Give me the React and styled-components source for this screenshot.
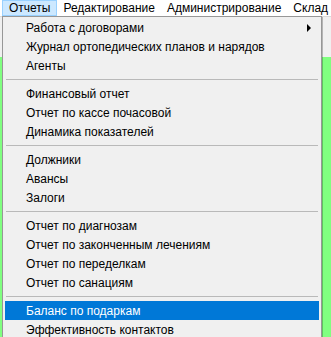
import React from "react";
import styled, { createGlobalStyle } from "styled-components";

const Global = createGlobalStyle`
  html, body { margin: 0; padding: 0; }
  body {
    width: 331px;
    height: 337px;
    overflow: hidden;
    font-family: "Liberation Sans", Arial, sans-serif;
    font-size: 12px;
    color: #000;
  }
`;

const Page = styled.div`
  position: relative;
  width: 331px;
  height: 337px;
  display: flex;
  flex-direction: column;
  background: #80ff80;
`;

const MenuBar = styled.div`
  height: 16px;
  display: flex;
  align-items: stretch;
  padding-left: 2px;
  background: #ffffff;
  white-space: nowrap;
  overflow: hidden;
`;

const BarItem = styled.div`
  display: flex;
  align-items: center;
  padding: 0 6px;
  border: 1px solid ${(p) => (p.$active ? "#99d1ff" : "transparent")};
  border-left-width: ${(p) => (p.$active ? 1 : 0)}px;
  border-right-width: ${(p) => (p.$active ? 1 : 0)}px;
  background: ${(p) => (p.$active ? "#cce8ff" : "transparent")};
  line-height: 14px;
`;

const Toolbar = styled.div`
  height: 41px;
  background: #f0f0f0;
  border-top: 1px solid #dadada;
  box-sizing: border-box;
`;

const Dropdown = styled.div`
  position: absolute;
  top: 16px;
  left: 2px;
  width: 320px;
  box-sizing: border-box;
  background: #f0f0f0;
  border: 1px solid #979797;
  box-shadow: 1px 1px 0 rgba(0, 0, 0, 0.25);
  padding: 1px 0;
  display: flex;
  flex-direction: column;
`;

const Item = styled.div`
  position: relative;
  height: 19px;
  margin: 0 2px;
  padding-left: 21px;
  display: flex;
  align-items: center;
  white-space: nowrap;
  background: ${(p) => (p.$hot ? "#0078d7" : "transparent")};
  color: ${(p) => (p.$hot ? "#ffffff" : "#000000")};
`;

const Arrow = styled.span`
  position: absolute;
  right: 8px;
  top: 6px;
  width: 0;
  height: 0;
  border-top: 4px solid transparent;
  border-bottom: 4px solid transparent;
  border-left: 4px solid #000;
`;

const Separator = styled.div`
  height: 9px;
  display: flex;
  align-items: center;
  padding: 0 3px;
  &::after {
    content: "";
    flex: 1;
    height: 1px;
    background: #b9b9b9;
  }
`;

const menu = [
  { t: "Работа с договорами", sub: true },
  { t: "Журнал ортопедических планов и нарядов" },
  { t: "Агенты" },
  null,
  { t: "Финансовый отчет" },
  { t: "Отчет по кассе почасовой" },
  { t: "Динамика показателей" },
  null,
  { t: "Должники" },
  { t: "Авансы" },
  { t: "Залоги" },
  null,
  { t: "Отчет по диагнозам" },
  { t: "Отчет по законченным лечениям" },
  { t: "Отчет по переделкам" },
  { t: "Отчет по санациям" },
  null,
  { t: "Баланс по подаркам", hot: true },
  { t: "Эффективность контактов" },
];

export default function App() {
  return (
    <>
      <Global />
      <Page>
        <MenuBar>
          <BarItem $active>Отчеты</BarItem>
          <BarItem>Редактирование</BarItem>
          <BarItem>Администрирование</BarItem>
          <BarItem>Склад</BarItem>
        </MenuBar>
        <Toolbar />
        <Dropdown>
          {menu.map((m, i) =>
            m ? (
              <Item key={i} $hot={m.hot}>
                {m.t}
                {m.sub && <Arrow />}
              </Item>
            ) : (
              <Separator key={i} />
            )
          )}
        </Dropdown>
      </Page>
    </>
  );
}
